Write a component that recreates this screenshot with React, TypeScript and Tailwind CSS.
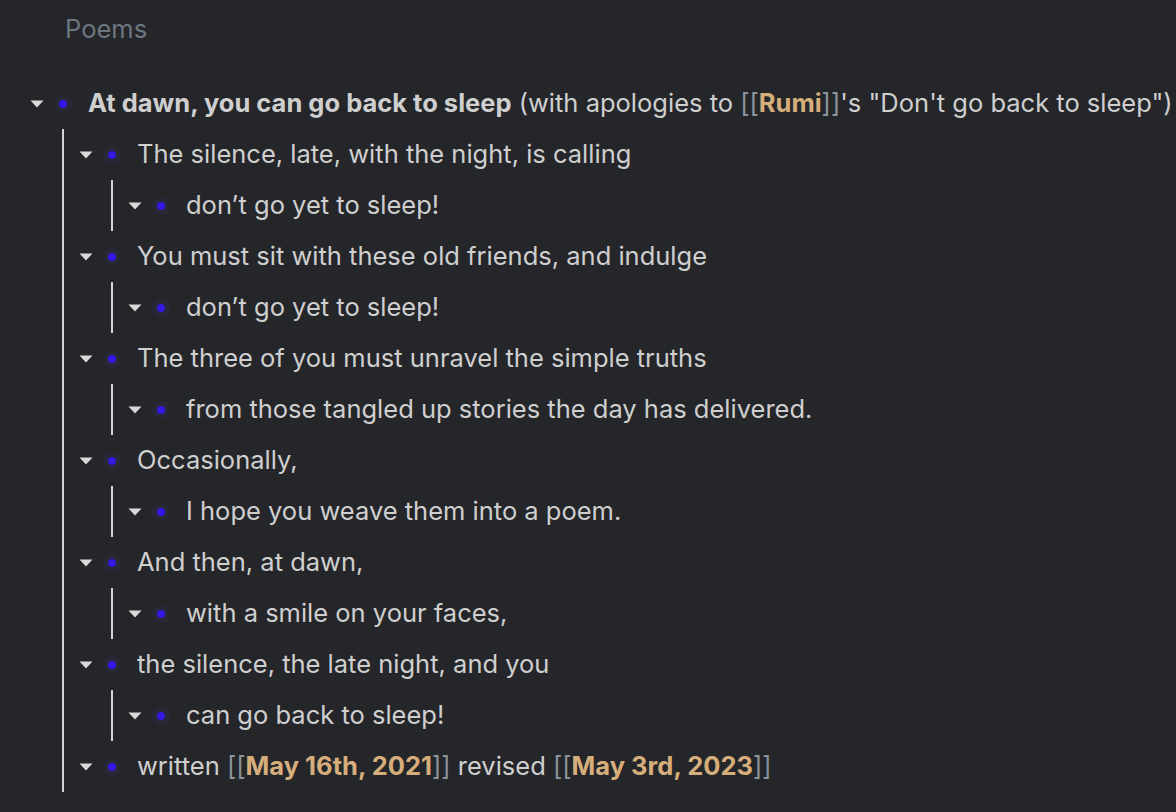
import React from "react";

type Block = {
    content: React.ReactNode;
    children?: Block[];
};

const Link = ({ children }: { children: React.ReactNode }) => (
    <>
        <span className="text-[#8b939c]">[[</span>
        <span className="font-bold text-[#d6ae7b]">{children}</span>
        <span className="text-[#8b939c]">]]</span>
    </>
);

const leaf = (text: string): Block[] => [{ content: text }];

const blocks: Block[] = [
    {
        content: (
            <>
                <span className="font-bold">At dawn, you can go back to sleep</span> (with apologies to{" "}
                <Link>Rumi</Link>'s "Don't go back to sleep")
            </>
        ),
        children: [
            { content: "The silence, late, with the night, is calling", children: leaf("don’t go yet to sleep!") },
            { content: "You must sit with these old friends, and indulge", children: leaf("don’t go yet to sleep!") },
            {
                content: "The three of you must unravel the simple truths",
                children: leaf("from those tangled up stories the day has delivered."),
            },
            { content: "Occasionally,", children: leaf("I hope you weave them into a poem.") },
            { content: "And then, at dawn,", children: leaf("with a smile on your faces,") },
            { content: "the silence, the late night, and you", children: leaf("can go back to sleep!") },
            {
                content: (
                    <>
                        written <Link>May 16th, 2021</Link> revised <Link>May 3rd, 2023</Link>
                    </>
                ),
            },
        ],
    },
];

function Arrow() {
    return (
        <svg width="14" height="8" viewBox="0 0 14 8" className="block">
            <path d="M0.5 0.5 H13.5 L7 7.5 Z" fill="#d9d9d9" />
        </svg>
    );
}

function BlockRow({ block }: { block: Block }) {
    return (
        <div>
            <div className="flex items-center h-[51px]">
                <span className="w-[24px] flex justify-center">
                    <Arrow />
                </span>
                <span className="w-[28px] flex justify-center">
                    <span className="w-[18px] h-[18px] rounded-full bg-[#282837] flex items-center justify-center">
                        <span className="w-[8px] h-[8px] rounded-full bg-[#3518e4]" />
                    </span>
                </span>
                <span className="pl-[11px] whitespace-nowrap">{block.content}</span>
            </div>
            {block.children && (
                <div className="ml-[37px] border-l-2 border-[#d4d4d4] pl-[10px]">
                    {block.children.map((child, i) => (
                        <BlockRow key={i} block={child} />
                    ))}
                </div>
            )}
        </div>
    );
}

export default function App() {
    return (
        <div
            className="w-[1176px] h-[812px] overflow-hidden bg-[#25262a] text-[#cfcfcf] text-[25.5px]"
            style={{ fontFamily: "Inter, 'Noto Sans', sans-serif" }}
        >
            {/* Page title */}
            <div className="pl-[65px] pt-[13px] text-[25.5px] leading-[32px] text-[#6d7782]">Poems</div>

            {/* Outline */}
            <div className="pl-[25px] mt-[33px]">
                {blocks.map((b, i) => (
                    <BlockRow key={i} block={b} />
                ))}
            </div>
        </div>
    );
}
